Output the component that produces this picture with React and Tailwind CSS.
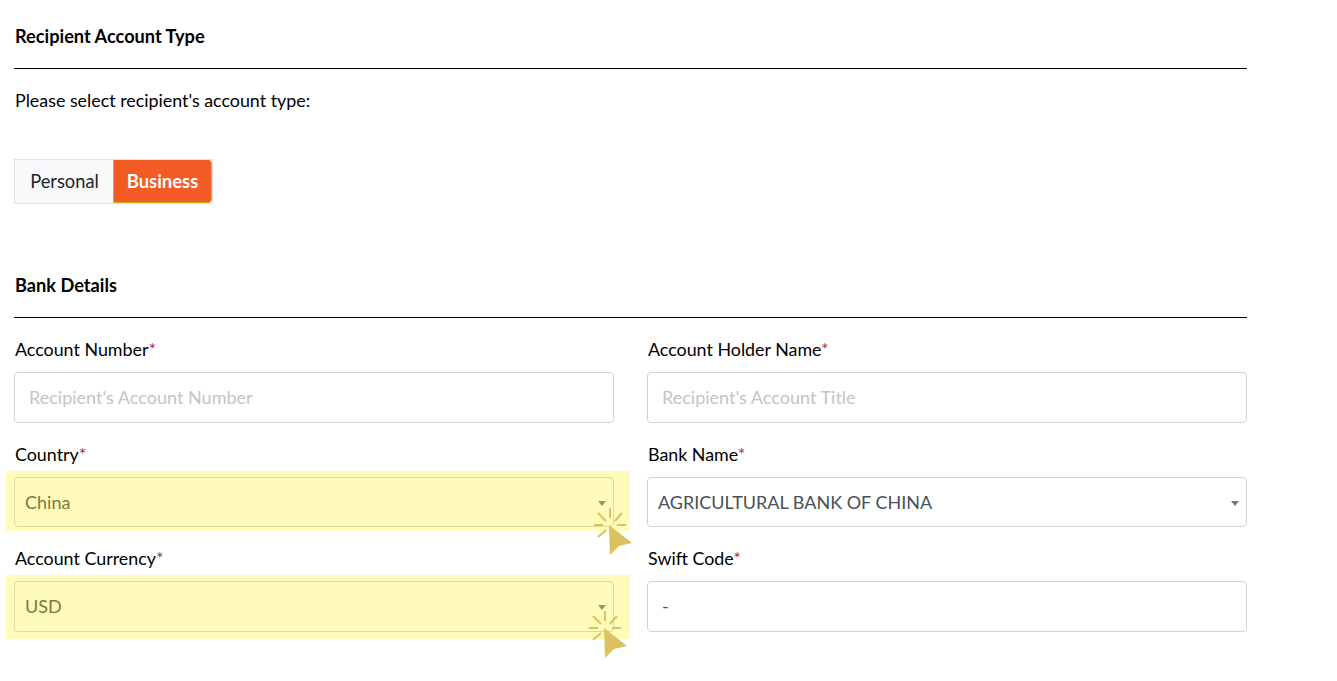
const Req = () => <span className="text-[#a3324f]">*</span>

function Field({ label, children, className = '' }) {
  return (
    <div className={`relative ${className}`}>
      <label className="block pl-px text-[17.85px] leading-[24px] text-black mb-[11px]">{label}<Req /></label>
      {children}
    </div>
  )
}

function TextBox({ placeholder, value }) {
  return (
    <div className="h-[51px] border border-[#ced4da] rounded-[4px] bg-white px-[14px] pt-px flex items-center text-[18.05px]">
      {placeholder ? <span className="text-[#c4c4c4]">{placeholder}</span> : <span className="text-[#495057]">{value}</span>}
    </div>
  )
}

function SelectBox({ value, className = 'h-[51px]' }) {
  return (
    <div className={`relative border border-[#ced4da] rounded-[4px] bg-white pl-[10px] flex items-center text-[18px] text-[#495057] ${className}`}>
      {value}
      <span className="absolute right-[7px] top-[23px] w-0 h-0 border-x-[4.5px] border-x-transparent border-t-[5.5px] border-t-[#777]" />
    </div>
  )
}

function ClickCursor() {
  return (
    <svg width="44" height="50" viewBox="0 0 44 50" fill="none">
      <g stroke="#dcc25f" strokeWidth="2">
        <path d="M20 2v10M8 7l8 8M32 7l-7 8M4 19h9M27 19h9M8 31l8-7" />
      </g>
      <path d="M19 19L42 37L29 40L20 49Z" fill="#dcc25f" />
    </svg>
  )
}

function Highlight({ className, cursorClass }) {
  return (
    <>
      <div className={`absolute bg-[#fff000]/[.267] ${className}`} />
      <div className={`absolute ${cursorClass}`}><ClickCursor /></div>
    </>
  )
}

export default function App() {
  return (
    <div className="relative h-[681px] bg-white overflow-hidden pl-[14px] pr-[90px] font-['Lato',sans-serif] text-black">
      <h2 className="pl-px pt-[24px] text-[18.2px] leading-[24px] font-bold">Recipient Account Type</h2>
      <hr className="mt-[20px] border-t border-black" />
      <p className="pl-px mt-[19px] text-[17.85px] leading-[24px]">Please select recipient's account type:</p>

      <div className="mt-[47px] inline-flex h-[45px] w-[199px] border border-[#dee2e6] bg-[#f8f9fa] align-top">
        <button className="w-[98px] text-[18.3px] text-[#212529] pl-px">Personal</button>
        <button className="flex-1 bg-[#f35a24] border border-[#d2b41e] border-t-[#f35a24] rounded-r-[4px] text-white font-bold text-[18.4px]">Business</button>
      </div>

      <h2 className="pl-px mt-[69px] text-[18.2px] leading-[24px] font-bold">Bank Details</h2>
      <hr className="mt-[20px] border-t border-black" />

      <div className="mt-[19px] grid grid-cols-[600px_600px] gap-x-[33px] gap-y-[18px]">
        <Field label="Account Number" className="mb-px"><TextBox placeholder="Recipient's Account Number" /></Field>
        <Field label="Account Holder Name" className="mb-px"><TextBox placeholder="Recipient's Account Title" /></Field>
        <Field label="Country" className="mb-px"><SelectBox value="China" className="h-[50px]" /></Field>
        <Field label="Bank Name" className="mb-px"><SelectBox value="AGRICULTURAL BANK OF CHINA" className="h-[50px]" /></Field>
        <Field label="Account Currency"><SelectBox value="USD" /></Field>
        <Field label="Swift Code"><TextBox value="-" /></Field>
      </div>

      <Highlight className="left-[6px] top-[471px] w-[624px] h-[60px]" cursorClass="left-[590px] top-[506px]" />
      <Highlight className="left-[6px] top-[575px] w-[624px] h-[64px]" cursorClass="left-[585px] top-[609px]" />
    </div>
  )
}
